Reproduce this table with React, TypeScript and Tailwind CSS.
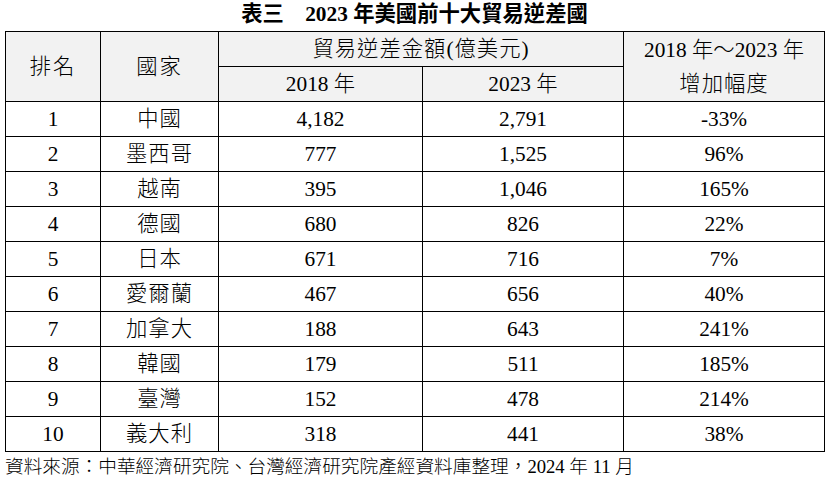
const rows = [
  { rank: 1, country: '中國', y2018: '4,182', y2023: '2,791', change: '-33%' },
  { rank: 2, country: '墨西哥', y2018: '777', y2023: '1,525', change: '96%' },
  { rank: 3, country: '越南', y2018: '395', y2023: '1,046', change: '165%' },
  { rank: 4, country: '德國', y2018: '680', y2023: '826', change: '22%' },
  { rank: 5, country: '日本', y2018: '671', y2023: '716', change: '7%' },
  { rank: 6, country: '愛爾蘭', y2018: '467', y2023: '656', change: '40%' },
  { rank: 7, country: '加拿大', y2018: '188', y2023: '643', change: '241%' },
  { rank: 8, country: '韓國', y2018: '179', y2023: '511', change: '185%' },
  { rank: 9, country: '臺灣', y2018: '152', y2023: '478', change: '214%' },
  { rank: 10, country: '義大利', y2018: '318', y2023: '441', change: '38%' },
]

const cell = 'border border-black text-center align-middle p-0'
const head = 'border border-black text-center align-middle p-0 bg-[#f2f2f2] font-light'

export default function App() {
  return (
    <div className="w-[830px] h-[488px] bg-white pl-[5px] text-black font-['Liberation_Serif','Noto_Sans_CJK_TC',serif]">
      {/* title */}
      <div className="w-[819px] h-[31px] flex items-center justify-center pb-[3px] text-[21.33px] leading-[28px] font-bold">
        表三　2023 年美國前十大貿易逆差國
      </div>

      <table className="w-[819px] table-fixed border-collapse text-[21.33px] leading-[26px] font-light">
        <colgroup>
          <col className="w-[95px]" />
          <col className="w-[118px]" />
          <col className="w-[204px]" />
          <col className="w-[201px]" />
          <col className="w-[201px]" />
        </colgroup>
        <thead>
          <tr className="h-[35px]">
            <th rowSpan={2} className={`${head} tracking-[2px]`}>排名</th>
            <th rowSpan={2} className={`${head} tracking-[2px]`}>國家</th>
            <th colSpan={2} className={`${head} tracking-[1px]`}>貿易逆差金額(億美元)</th>
            <th rowSpan={2} className={head}>
              <div className="leading-[34px]">2018 年～2023 年</div>
              <div className="leading-[34px] tracking-[1px]">增加幅度</div>
            </th>
          </tr>
          <tr className="h-[35px]">
            <th className={head}>2018 年</th>
            <th className={head}>2023 年</th>
          </tr>
        </thead>
        <tbody>
          {rows.map((r) => (
            <tr key={r.rank} className="h-[35px]">
              <td className={cell}>{r.rank}</td>
              <td className={`${cell} tracking-[1px]`}>{r.country}</td>
              <td className={cell}>{r.y2018}</td>
              <td className={cell}>{r.y2023}</td>
              <td className={cell}>{r.change}</td>
            </tr>
          ))}
        </tbody>
      </table>

      <div className="pt-[1px] text-[18.67px] leading-[28px] font-light">
        資料來源：中華經濟研究院、台灣經濟研究院產經資料庫整理，2024 年 11 月
      </div>
    </div>
  )
}
